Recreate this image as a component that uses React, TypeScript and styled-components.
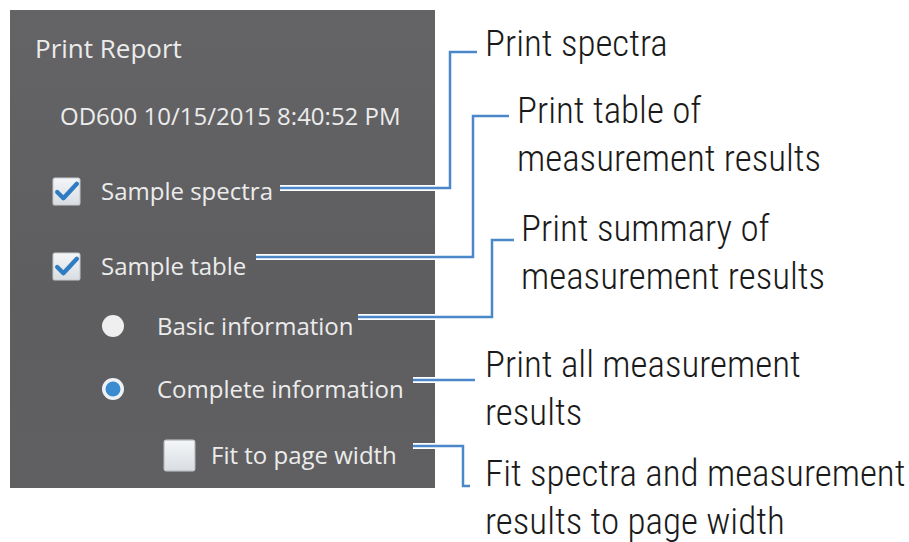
import React from "react";
import styled, { createGlobalStyle } from "styled-components";

const GlobalStyle = createGlobalStyle`
  html, body {
    margin: 0;
    padding: 0;
    background: #ffffff;
    overflow: hidden;
  }
`;

const Page = styled.div`
  position: relative;
  width: 909px;
  height: 542px;
  box-sizing: border-box;
  padding: 10px 0 0 10px;
  display: flex;
  align-items: flex-start;
`;

const Panel = styled.section`
  flex: 0 0 425px;
  height: 478px;
  box-sizing: border-box;
  padding: 12px 0 0 25px;
  display: flex;
  flex-direction: column;
  background: linear-gradient(180deg, #646466 0%, #5e5e60 60%, #606062 100%);
  font-family: "Open Sans", "DejaVu Sans", sans-serif;
  color: #ececec;
`;

const Title = styled.div`
  font-size: 26px;
  line-height: 32px;
  margin-top: 10px;
`;

const Stamp = styled.div`
  font-size: 24px;
  line-height: 30px;
  margin: 37px 0 0 25px;
`;

const Row = styled.label<{ $gap: number; $indent: number; $space: number }>`
  display: flex;
  align-items: center;
  height: 36px;
  margin-top: ${(p) => p.$gap}px;
  padding-left: ${(p) => p.$indent}px;
  gap: ${(p) => p.$space}px;
  font-size: 24px;
  line-height: 30px;
  white-space: nowrap;
`;

const Notes = styled.div`
  display: flex;
  flex-direction: column;
  margin-left: 50px;
  font-family: "Liberation Sans Narrow", "Roboto Condensed", "DejaVu Sans Condensed", "Liberation Sans", sans-serif;
  font-size: 37px;
  font-weight: 300;
  line-height: 48px;
  color: #1a1a1a;
`;

const Note = styled.div<{ $gap: number; $indent: number }>`
  margin-top: ${(p) => p.$gap}px;
  padding-left: ${(p) => p.$indent}px;
  white-space: nowrap;
`;

const Connectors = styled.svg`
  position: absolute;
  left: 0;
  top: 0;
  pointer-events: none;
`;

const CheckBox = ({ checked, size }: { checked: boolean; size: number }) => (
  <svg width={size} height={size} viewBox="0 0 28 28">
    <defs>
      <linearGradient id={`cb${size}${checked}`} x1="0" y1="0" x2="0" y2="1">
        <stop offset="0" stopColor="#f4f6f8" />
        <stop offset="1" stopColor="#d9dde2" />
      </linearGradient>
    </defs>
    <rect x="1" y="1" width="26" height="26" rx="2" fill={`url(#cb${size}${checked})`} stroke="#c9ccd0" strokeWidth="1" />
    {checked && (
      <path d="M5 14.5 L11 20.5 L24 6.5" fill="none" stroke="#2f7cc2" strokeWidth="4.2" strokeLinecap="round" strokeLinejoin="round" />
    )}
  </svg>
);

const Radio = ({ checked }: { checked: boolean }) => (
  <svg width="24" height="24" viewBox="0 0 24 24">
    {checked ? (
      <>
        <circle cx="12" cy="12" r="11" fill="#eef2f6" />
        <circle cx="12" cy="12" r="7.5" fill="#3b8bd0" />
      </>
    ) : (
      <circle cx="12" cy="12" r="11" fill="#efefef" />
    )}
  </svg>
);

const callouts = [
  "280,188 450,188 450,52 477,52",
  "256,257 473,257 473,116 509,116",
  "358,317 492,317 492,240 514,240",
  "413,380 475,380",
  "413,446 463,446 463,486 470,486",
];

export default function App() {
  return (
    <>
      <GlobalStyle />
      <Page>
        <Panel>
          <Title>Print Report</Title>
          <Stamp>OD600 10/15/2015 8:40:52 PM</Stamp>
          <Row $gap={42} $indent={17} $space={20}>
            <CheckBox checked size={29} />
            Sample spectra
          </Row>
          <Row $gap={39} $indent={17} $space={20}>
            <CheckBox checked size={29} />
            Sample table
          </Row>
          <Row $gap={24} $indent={66} $space={32}>
            <Radio checked={false} />
            Basic information
          </Row>
          <Row $gap={27} $indent={66} $space={32}>
            <Radio checked />
            Complete information
          </Row>
          <Row $gap={30} $indent={128} $space={15}>
            <CheckBox checked={false} size={33} />
            Fit to page width
          </Row>
        </Panel>
        <Notes>
          <Note $gap={10} $indent={0}>Print spectra</Note>
          <Note $gap={19} $indent={32}>
            Print table of
            <br />
            measurement results
          </Note>
          <Note $gap={22} $indent={36}>
            Print summary of
            <br />
            measurement results
          </Note>
          <Note $gap={40} $indent={0}>
            Print all measurement
            <br />
            results
          </Note>
          <Note $gap={13} $indent={0}>
            Fit spectra and measurement
            <br />
            results to page width
          </Note>
        </Notes>
        <Connectors width="909" height="542" viewBox="0 0 909 542">
          {callouts.map((pts) => (
            <polyline key={pts + "h"} points={pts} fill="none" stroke="#ffffff" strokeWidth="6" />
          ))}
          {callouts.map((pts) => (
            <polyline key={pts} points={pts} fill="none" stroke="#4a88c9" strokeWidth="2.5" />
          ))}
        </Connectors>
      </Page>
    </>
  );
}
